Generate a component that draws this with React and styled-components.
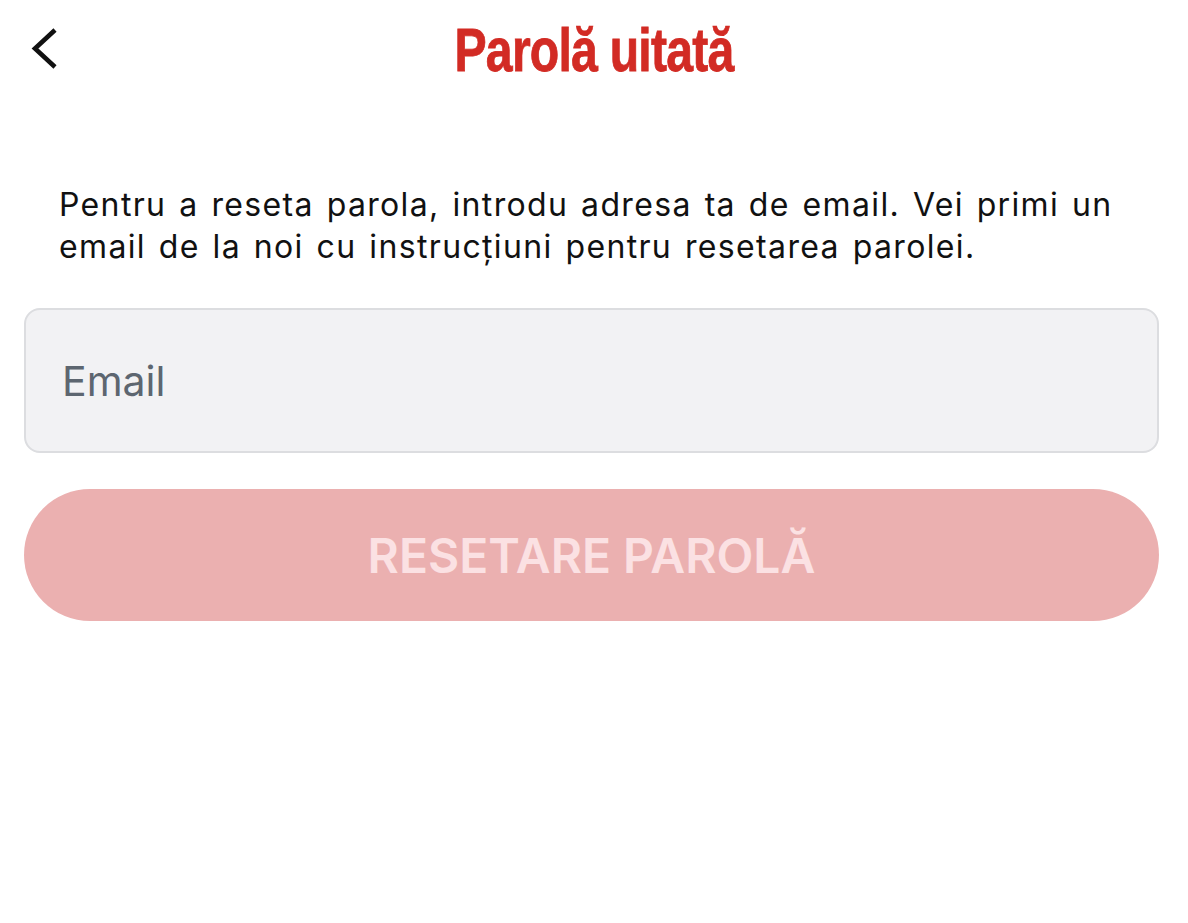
import React from "react";
import styled, { createGlobalStyle } from "styled-components";

const Global = createGlobalStyle`
  html, body { margin: 0; padding: 0; background: #ffffff; }
  body { font-family: Inter, "Noto Sans", sans-serif; }
`;

const Page = styled.div`
  width: 1188px;
  min-height: 923px;
  background: #fff;
  display: flex;
  flex-direction: column;
`;

const Header = styled.header`
  height: 100px;
  display: grid;
  grid-template-columns: 100px 1fr 100px;
  align-items: start;
`;

const BackButton = styled.button`
  border: 0;
  background: none;
  padding: 0;
  margin: 28px 0 0 31px;
  width: 30px;
  height: 42px;
  display: flex;
  cursor: pointer;
`;

const Title = styled.h1`
  margin: 17px 0 0;
  text-align: center;
  font-family: "Liberation Sans Narrow", "Liberation Sans", sans-serif;
  font-weight: 700;
  font-size: 61px;
  line-height: 66px;
  letter-spacing: -1px;
  color: #d22b24;
  -webkit-text-stroke: 0.8px #d22b24;
  transform: scaleX(0.79);
`;

const Content = styled.main`
  display: flex;
  flex-direction: column;
  padding: 84px 29px 0 24px;
`;

const Intro = styled.p`
  margin: 0 35px 40px 35px;
  font-family: Inter, sans-serif;
  font-size: 32px;
  line-height: 42px;
  color: #111;
  letter-spacing: 1.35px;
  word-spacing: 2.5px;
`;

const EmailInput = styled.input`
  box-sizing: border-box;
  width: 100%;
  height: 145px;
  border: 2px solid #dcdde0;
  border-radius: 16px;
  background: #f2f2f4;
  padding: 0 36px;
  font-family: Inter, sans-serif;
  font-size: 41px;
  color: #111;
  outline: none;
  &::placeholder { color: #5d6670; }
`;

const SubmitButton = styled.button`
  margin-top: 36px;
  width: 100%;
  height: 132px;
  border: 0;
  border-radius: 66px;
  background: #ebb0b0;
  color: #fbe1e3;
  font-family: Inter, sans-serif;
  font-weight: 600;
  font-size: 48px;
  cursor: default;
`;

export default function App() {
  return (
    <Page>
      <Global />
      <Header>
        <BackButton aria-label="Înapoi">
          <svg width="30" height="42" viewBox="0 0 30 42">
            <path d="M24 2 L4 20.5 L24 39" fill="none" stroke="#111" strokeWidth="4.6" strokeLinecap="butt" strokeLinejoin="miter" />
          </svg>
        </BackButton>
        <Title>Parolă uitată</Title>
        <div />
      </Header>
      <Content>
        <Intro>
          Pentru a reseta parola, introdu adresa ta de email. Vei primi un email de la noi cu instrucțiuni pentru resetarea parolei.
        </Intro>
        <EmailInput type="email" placeholder="Email" />
        <SubmitButton disabled>RESETARE PAROLĂ</SubmitButton>
      </Content>
    </Page>
  );
}
